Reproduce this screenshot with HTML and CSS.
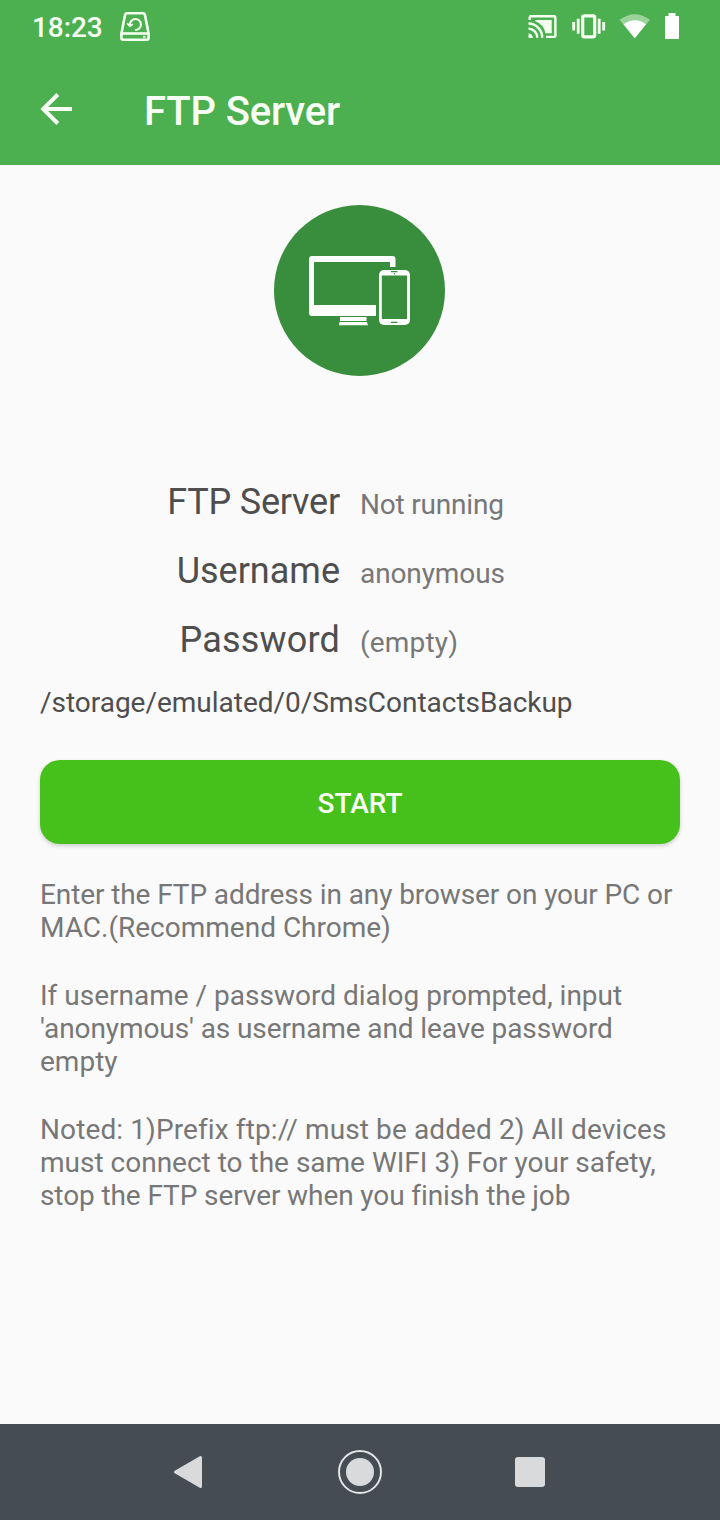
FILE: index.html
```html
<!DOCTYPE html>
<html lang="en">
<head>
<meta charset="utf-8">
<title>FTP Server</title>
<link rel="stylesheet" href="styles.css">
</head>
<body>
<div class="screen">
  <header class="header">
    <div class="status">
      <span class="clock">18:23</span>
      <svg class="backup-icon" width="32" height="32" viewBox="0 0 32 32" fill="none" stroke="#f4fff0" stroke-width="2.6" stroke-linejoin="round">
        <path d="M8 2.300h16q1.500 0 1.900 1.500L29.600 22.500v4.300q0 2-2 2H4.400q-2 0-2-2v-4.300L6.100 3.800q.4-1.500 1.900-1.500z"/>
        <path d="M2.500 22.500h27"/>
        <path d="M11 14.200a5.500 5.500 0 1 1 5 4.800" stroke-width="2"/>
        <path d="M8.200 12.200l2.500 3.100 3.200-2.200" stroke-width="1.700"/>
        <path d="M24 25.800h2.500" stroke-width="2"/>
      </svg>
      <div class="status-icons">
        <svg width="30" height="26" viewBox="0 0 30 26" fill="none" stroke="#f4fff0" stroke-width="2.400">
          <path d="M1.700 7V4.500q0-1.200 1.200-1.200h23.300q1.200 0 1.200 1.200v18.200q0 1.200-1.200 1.200H18"/>
          <path d="M7 7h16.700v13.200H17.500Q15.500 11 7 8z" fill="#f4fff0" stroke="none"/>
          <path d="M.5 10.500a14 14 0 0 1 13.700 14.300M.5 15.600a9 9 0 0 1 8.800 9.200"/>
          <path d="M.5 20.500a4.300 4.300 0 0 1 4.300 4.500H.5z" fill="#f4fff0" stroke="none"/>
        </svg>
        <svg width="34" height="26" viewBox="0 0 34 26" fill="none" stroke="#f4fff0" stroke-width="2.800">
          <rect x="10.700" y="2.800" width="12" height="21" rx="1.500" stroke-width="3.200"/>
          <path d="M6.200 5.800v15M1.700 9v8.500M27.200 5.800v15M31.700 9v8.500"/>
        </svg>
        <svg width="32" height="26" viewBox="0 0 32 26">
          <path d="M.5 6.800Q16-4.500 31 6.800L15.700 25.300z" fill="#9bd39c"/>
          <path d="M4.600 11.200Q16 3.400 27 11.200L15.700 25.300z" fill="#fff"/>
        </svg>
        <svg width="14" height="26" viewBox="0 0 14 26"><path d="M3.500 0h7v3H13q1 0 1 1v21q0 1-1 1H1q-1 0-1-1V4q0-1 1-1h2.500z" fill="#fff"/></svg>
      </div>
    </div>
    <div class="toolbar">
      <svg class="back" width="34" height="34" viewBox="0 0 34 34" fill="none" stroke="#f7fff5" stroke-width="4"><path d="M33 17H4.500M18.800 2.500L4.200 17l14.600 14.500"/></svg>
      <h1 class="title">FTP Server</h1>
    </div>
  </header>
  <main class="content">
    <svg class="devices" width="172" height="172" viewBox="0 0 172 172">
      <circle cx="85.500" cy="85.500" r="85.500" fill="#388e3c"/>
      <path fill="#fff" fill-rule="evenodd" d="M38 51h80.500q3 0 3 3v8h-5.500v-5H40v43h62v11H38q-3 0-3-3V54q0-3 3-3z"/>
      <path fill="#fff" d="M66 112h26.500v4H66zM65.500 117h27.500l1 3.200H65z"/>
      <rect x="105" y="65" width="31" height="55" rx="5" fill="#fff"/>
      <path d="M107.800 70.500h25.200v43.500h-25.200z" fill="#388e3c"/>
      <path d="M117 66.600h6.500M117 117.300h6.500" stroke="#388e3c" stroke-width="1.300"/>
      <circle cx="120.400" cy="68.700" r=".7" fill="#388e3c"/>
    </svg>
    <dl class="details">
      <dt class="tight-2">FTP Server</dt><dd class="tight-2">Not running</dd>
      <dt>Username</dt><dd class="tight">anonymous</dd>
      <dt class="loose-2">Password</dt><dd class="loose-2">(empty)</dd>
    </dl>
    <p class="path">/storage/emulated/0/SmsContactsBackup</p>
    <button class="start">START</button>
    <div class="help">
      <p><span class="tight">Enter the FTP address in any browser on your PC or</span><br>MAC.(Recommend Chrome)</p>
      <p>If username / password dialog prompted, input<br><span class="tight">'anonymous' as username and leave password</span><br>empty</p>
      <p><span class="loose">Noted: 1)Prefix ftp:// must be added 2) All devices</span><br>must connect to the same WIFI 3) For your safety,<br><span class="tight">stop the FTP server when you finish the job</span></p>
    </div>
  </main>
  <nav class="navbar">
    <svg width="32" height="36" viewBox="0 0 32 36"><path d="M3.500 18L28.500 3.500v29z" fill="#d8dadc" stroke="#d8dadc" stroke-width="3" stroke-linejoin="round" /></svg>
    <svg width="44" height="44" viewBox="0 0 44 44"><circle cx="22" cy="22" r="21" fill="none" stroke="#e2e4e5" stroke-width="2"/><circle cx="22" cy="22" r="14" fill="#d8dadc"/></svg>
    <svg width="30" height="30" viewBox="0 0 30 30"><rect width="30" height="30" rx="3" fill="#d8dadc"/></svg>
  </nav>
</div>
</body>
</html>
```
FILE: styles.css
```css
* { box-sizing: border-box; }
body { margin: 0; font-family: Roboto, "Liberation Sans", sans-serif; }
h1, p, dl, dd { margin: 0; }
svg { display: block; flex: none; }
.tight { letter-spacing: -.1px; }
.tight-2 { letter-spacing: -.2px; }
.loose { letter-spacing: .11px; }
.loose-2 { letter-spacing: .18px; }
.screen { width: 720px; height: 1520px; display: flex; flex-direction: column; background: #fafafa; }
.header { height: 165px; background: #4caf50; color: #f7fff5; }
.status { height: 53px; padding: 1px 41px 0 32px; display: flex; align-items: center; }
.clock { width: 71px; padding-top: 1px; font-size: 28px; font-weight: 500; letter-spacing: -.1px; white-space: nowrap; }
.backup-icon { margin-left: 16px; }
.status-icons { margin: 0 0 2px auto; display: flex; align-items: center; gap: 14px; }
.status-icons svg:nth-child(-n+2) { margin: 0 -1px 0 1px; }
.toolbar { height: 112px; padding: 0 39px; display: flex; align-items: center; }
.title { margin: 6px 0 0 71px; font-size: 40px; line-height: 48px; font-weight: 500; letter-spacing: -.15px; white-space: nowrap; }
.content { flex: 1; padding: 40px 40px 0; display: flex; flex-direction: column; }
.devices { align-self: center; }
.details { margin-top: 104px; display: grid; grid-template-columns: 300px 1fr; column-gap: 20px; row-gap: 27px; align-items: baseline; }
.details dt { font-size: 36px; line-height: 42px; text-align: right; color: #4e4e4e; }
.details dd { font-size: 28px; line-height: 33px; color: #777; }
.path { margin-top: 25px; font-size: 28px; line-height: 33px; letter-spacing: -.02px; color: #4e4e4e; }
.start { height: 84px; margin-top: 41px; padding: 2px 0 0; border: 0; border-radius: 20px; background: #46c01b; color: #fafff5; font: 500 28px/33px Roboto, "Liberation Sans", sans-serif; box-shadow: 0 2px 4px rgba(0, 0, 0, .18); }
.help { margin-top: 34px; display: flex; flex-direction: column; gap: 35px; font-size: 28px; line-height: 33px; color: #777; white-space: nowrap; }
.navbar { height: 96px; padding: 0 175px 0 172px; display: flex; align-items: center; justify-content: space-between; background: #454d52; }
```
